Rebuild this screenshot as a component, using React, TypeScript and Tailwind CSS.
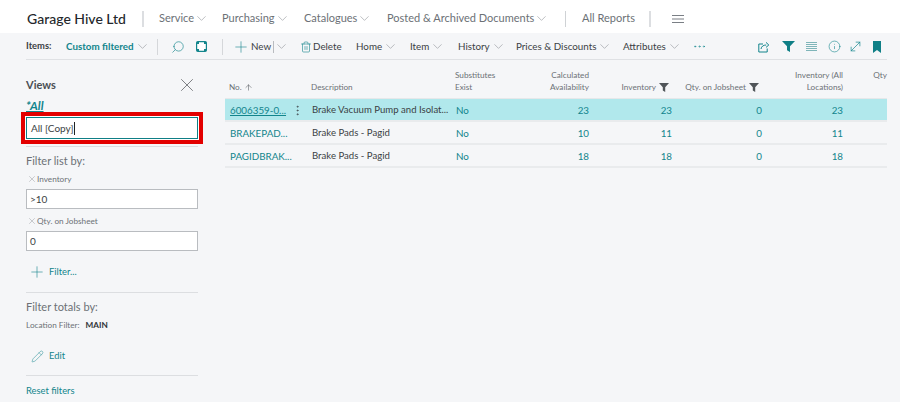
import { ArrowUp, ChevronDown, Plus, Search, Trash2, Info, MoveDiagonal, X, Pencil, MoreVertical, MoreHorizontal } from 'lucide-react';

const teal = 'text-[#12858c]';

const actions = [
  { label: 'Home', w: 'w-[54px]' },
  { label: 'Item', w: 'w-[48px]' },
  { label: 'History', w: 'w-[58px]' },
  { label: 'Prices & Discounts', w: 'w-[107px]' },
  { label: 'Attributes', w: 'w-[71px]' },
];

const rows = [
  { no: '6006359-0...', desc: 'Brake Vacuum Pump and Isolat...', calc: 23, inv: 23, job: 0, all: 23, on: true },
  { no: 'BRAKEPAD...', desc: 'Brake Pads - Pagid', calc: 10, inv: 11, job: 0, all: 11, on: false },
  { no: 'PAGIDBRAK...', desc: 'Brake Pads - Pagid', calc: 18, inv: 18, job: 0, all: 18, on: false },
];

const cols = 'grid grid-cols-[80px_144px_71px_70px_82px_90px_82px_43px]';

function Chevron({ className = '' }: { className?: string }) {
  return <ChevronDown size={15} strokeWidth={0.8} className={`text-[#7a7f85] shrink-0 ${className}`} />;
}

function HeaderFilter() {
  return (
    <svg width="10" height="9" viewBox="0 0 10 9" className="ml-[3px] shrink-0">
      <path d="M0 0h10L6.2 4.2V9L3.8 7.6V4.2z" fill="#505559" />
    </svg>
  );
}

function ShareIcon() {
  return (
    <svg width="12" height="12" viewBox="0 0 12 12" fill="none" stroke="#12858c" strokeWidth="1">
      <path d="M5 3H.8v8h8.4V7.5" />
      <path d="M3 8c.4-2.6 2.4-4 5.2-4M8 1.4 10.8 4 8 6.4" />
    </svg>
  );
}

function LayoutIcon() {
  return (
    <svg width="11" height="11" viewBox="0 0 11 11" fill="none">
      <rect x=".6" y=".6" width="9.8" height="9.8" rx="1.2" fill="#fff" stroke="#12858c" strokeWidth="1.2" />
      <path d="M1 1h2v2H1zM8 1h2v2H8zM1 8h2v2H1zM8 8h2v2H8z" fill="#12858c" />
    </svg>
  );
}

function SolidFilter() {
  return (
    <svg width="13" height="11" viewBox="0 0 13 11">
      <path d="M0 0h13L8 5.2V11L5 9.2V5.2z" fill="#0f7f86" />
    </svg>
  );
}

function LinesIcon() {
  return (
    <svg width="11" height="9" viewBox="0 0 11 9" fill="none" stroke="#7fb5b9" strokeWidth="1">
      <path d="M0 .5h11M0 2.5h11M0 4.5h11M0 6.5h11M0 8.5h11" />
    </svg>
  );
}

function BookmarkIcon() {
  return (
    <svg width="8" height="12" viewBox="0 0 8 12">
      <path d="M0 0h8v12L4 9 0 12z" fill="#0f7f86" />
    </svg>
  );
}

function HamburgerIcon() {
  return (
    <svg width="12" height="8" viewBox="0 0 12 8" fill="none" stroke="#7a7f85" strokeWidth="1">
      <path d="M0 .5h12M0 4h12M0 7.5h12" />
    </svg>
  );
}

export default function App() {
  return (
    <div className="w-[900px] h-[402px] overflow-hidden bg-[#f5f6f8] text-[#3b3f44] font-['Lato',sans-serif]">
      <div className="h-[33px] bg-white flex items-center pl-[27px] pt-[4px]">
        <div className="w-[115px] text-[14px] leading-none font-medium text-[#24272b] whitespace-nowrap">Garage Hive Ltd</div>
        <div className="w-[2px] h-[16px] bg-[#dcdee1] mr-[15px]" />
        <div className="flex text-[11px] text-[#6c7176] whitespace-nowrap">
          <span className="flex items-center w-[63px]">Service<Chevron /></span>
          <span className="flex items-center w-[82px]">Purchasing<Chevron /></span>
          <span className="flex items-center w-[83px]">Catalogues<Chevron /></span>
          <span className="flex items-center w-[178px]">Posted & Archived Documents<Chevron /></span>
        </div>
        <div className="w-px h-[16px] bg-[#cfd2d5] mr-[16px]" />
        <span className="w-[67px] text-[11px] text-[#6c7176] whitespace-nowrap">All Reports</span>
        <div className="w-[2px] h-[16px] bg-[#dcdee1] mr-[21px]" />
        <HamburgerIcon />
      </div>

      <div className="h-[27px] mx-[26px] w-[861px] border-b border-[#dfe1e4] flex items-center pt-[1px] text-[9.8px] whitespace-nowrap">
        <span className="w-[40px] font-bold text-[9.4px] text-[#3b3f44]">Items:</span>
        <span className={`flex items-center w-[91px] font-bold ${teal}`}>Custom filtered<Chevron className="ml-[1px]" /></span>
        <div className="w-px h-[16px] bg-[#d5d7da] mr-[13px]" />
        <Search size={14} strokeWidth={1.1} className={`${teal} -scale-x-100 mr-[11px]`} />
        <LayoutIcon />
        <div className="w-px h-[16px] bg-[#d5d7da] ml-[15px] mr-[9px]" />
        <Plus size={18} strokeWidth={0.8} className={`${teal} mr-[1px]`} />
        <span className="w-[22px]">New</span>
        <div className="w-px h-[12px] bg-[#b9bcc0]" />
        <Chevron className="mr-[11px]" />
        <Trash2 size={12} strokeWidth={1.2} className={`${teal} shrink-0`} />
        <span className="w-[44px] pl-[1px]">Delete</span>
        {actions.map(a => (
          <span key={a.label} className={`flex items-center ${a.w}`}>{a.label}<Chevron className="ml-[1px]" /></span>
        ))}
        <MoreHorizontal size={15} strokeWidth={0.9} className={`${teal} -ml-[2px]`} />
        <div className="ml-auto flex items-center pr-[6px]">
          <ShareIcon />
          <span className="ml-[12px] flex"><SolidFilter /></span>
          <span className="ml-[11px] flex"><LinesIcon /></span>
          <Info size={13} strokeWidth={1.1} className={`${teal} ml-[11px]`} />
          <MoveDiagonal size={15} strokeWidth={1.1} className={`${teal} ml-[7px]`} />
          <span className="ml-[10px] flex"><BookmarkIcon /></span>
        </div>
      </div>

      <div className="flex">
        <aside className="w-[172px] ml-[26px] shrink-0">
          <div className="flex items-center justify-between h-[18px] mt-[16px]">
            <span className="text-[11px] font-bold text-[#4a4f54]">Views</span>
            <X size={22} strokeWidth={0.7} className="text-[#3b3f44]" />
          </div>
          <div className={`mt-[5px] text-[12px] leading-[14px] font-bold italic underline ${teal}`}>*All</div>
          <div className="-mx-[5px] mt-[-1px] h-[32px] border-[4px] border-[#e30000] p-[1px] bg-white">
            <div className="h-full border border-[#0f7f86] flex items-center px-[4px] text-[10px] text-[#3b3f44]">All [Copy]<span className="w-px h-[13px] bg-[#222]" /></div>
          </div>
          <div className="h-px bg-[#dcdee1] mt-[2px]" />
          <div className="mt-[6px] text-[11px] leading-[16px] text-[#6c7176]">Filter list by:</div>
          <div className="mt-[3px] h-[14px] flex items-center text-[8.2px] text-[#6c7176]"><X size={10} strokeWidth={0.8} className="ml-[1px]" />Inventory</div>
          <div className="mt-[3px] h-[20px] border border-[#b9bcc0] bg-white flex items-center px-[3px] text-[10px]">&gt;10</div>
          <div className="mt-[5px] h-[14px] flex items-center text-[8.2px] text-[#6c7176]"><X size={10} strokeWidth={0.8} className="ml-[1px]" />Qty. on Jobsheet</div>
          <div className="mt-[3px] h-[20px] border border-[#b9bcc0] bg-white flex items-center px-[3px] text-[10px]">0</div>
          <div className={`mt-[13px] h-[16px] flex items-center pl-[2px] text-[9.4px] ${teal}`}><Plus size={18} strokeWidth={0.8} className="mr-[3px]" />Filter...</div>
          <div className="h-px bg-[#dcdee1] mt-[12px]" />
          <div className="mt-[6px] text-[11px] leading-[16px] text-[#6c7176]">Filter totals by:</div>
          <div className="mt-[3px] flex items-center h-[14px] text-[8.2px] text-[#6c7176]">Location Filter:<span className="ml-[6px] font-bold text-[#2f3337]">MAIN</span></div>
          <div className={`mt-[16px] h-[16px] flex items-center pl-[5px] text-[9.4px] ${teal}`}><Pencil size={13} strokeWidth={0.9} className="mr-[5px]" />Edit</div>
          <div className="h-px bg-[#dcdee1] mt-[11px]" />
          <div className={`mt-[7px] text-[9.4px] leading-[16px] ${teal}`}>Reset filters</div>
        </aside>

        <main className="ml-[27px] w-[662px] text-[9.8px]">
          <div className={`${cols} h-[39px] border-b border-[#e6e8ea] text-[8.2px] leading-[11.5px] text-[#6c7176] items-end pb-[5px]`}>
            <span className="pl-[4px] flex items-center">No.<ArrowUp size={9} strokeWidth={1.4} className="ml-[2px] text-[#4a4f54]" /></span>
            <span className="pl-[6px]">Description</span>
            <span className="pl-[6px]">Substitutes<br />Exist</span>
            <span className="text-right pr-[1px]">Calculated<br />Availability</span>
            <span className="pr-[3px] flex items-center justify-end">Inventory<HeaderFilter /></span>
            <span className="pr-[3px] flex items-center justify-end whitespace-nowrap">Qty. on Jobsheet<HeaderFilter /></span>
            <span className="text-right pr-[1px]">Inventory (All<br />Locations)</span>
            <span className="text-right">Qty<br />&nbsp;</span>
          </div>
          {rows.map(r => (
            <div key={r.no} className={`${cols} h-[23px] items-center pt-[1px] border-b-2 whitespace-nowrap border-[#e9ebed] ${r.on ? 'bg-[#b1e8ec]' : ''} ${teal}`}>
              <span className={`pl-[5px] flex items-center justify-between pr-[1px] ${r.on ? 'underline' : ''}`}>
                {r.no}
                {r.on && <MoreVertical size={13} strokeWidth={1.2} className="text-[#3b3f44] shrink-0" />}
              </span>
              <span className="pl-[7px] text-[9.6px] text-[#3b3f44]">{r.desc}</span>
              <span className="pl-[7px]">No</span>
              <span className="text-right pr-[1px]">{r.calc}</span>
              <span className="text-right">{r.inv}</span>
              <span className="text-right">{r.job}</span>
              <span className="text-right pr-[1px]">{r.all}</span>
              <span />
            </div>
          ))}
        </main>
      </div>
    </div>
  );
}
